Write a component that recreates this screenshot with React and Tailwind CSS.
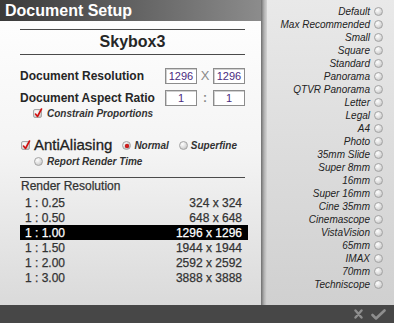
import React from 'react';

const presets = [
    'Default', 'Max Recommended', 'Small', 'Square', 'Standard', 'Panorama', 'QTVR Panorama',
    'Letter', 'Legal', 'A4', 'Photo', '35mm Slide', 'Super 8mm', '16mm', 'Super 16mm',
    'Cine 35mm', 'Cinemascope', 'VistaVision', '65mm', 'IMAX', '70mm', 'Techniscope',
];

const resolutions = [
    { ratio: '1 : 0.25', size: '324 x 324' },
    { ratio: '1 : 0.50', size: '648 x 648' },
    { ratio: '1 : 1.00', size: '1296 x 1296', active: true },
    { ratio: '1 : 1.50', size: '1944 x 1944' },
    { ratio: '1 : 2.00', size: '2592 x 2592' },
    { ratio: '1 : 3.00', size: '3888 x 3888' },
];

const Radio = ({ checked }) => (
    <span className="relative inline-block w-[9px] h-[9px] shrink-0 rounded-full border border-[#a4a4a4] bg-[radial-gradient(circle_at_35%_30%,#ffffff,#dcdcdc_55%,#b4b4b4)]">
        {checked && <span className="absolute left-[1.5px] top-[1.5px] w-[4px] h-[4px] rounded-full bg-[#d41c1c] shadow-[0_0_1px_#700]"></span>}
    </span>
);

const Check = () => (
    <span className="relative inline-block w-[9px] h-[9px] shrink-0 rounded-[2px] border border-[#a8a8a8] bg-[radial-gradient(circle_at_35%_30%,#ffffff,#d8d8d8_60%,#b8b8b8)]">
        <svg className="absolute -top-[2px] left-[0px]" width="9" height="10" viewBox="0 0 9 10">
            <path d="M1.5 6 L3.5 8.5 L7.5 1" fill="none" stroke="#d01010" strokeWidth="1.6" strokeLinecap="round" strokeLinejoin="round" />
        </svg>
    </span>
);

const Box = ({ value }) => (
    <div className="w-[32px] h-[16px] bg-white border border-[#8c8c8c] shadow-[inset_1px_1px_0_#d0d0d0] flex items-center justify-center text-[11px] text-[#4a2a80] leading-none">
        {value}
    </div>
);

export default function App() {
    return (
        <div className="w-[394px] h-[323px] flex flex-col overflow-hidden font-['Liberation_Sans',Arial,sans-serif] text-[#262626]">
            <div className="flex flex-1 min-h-0">
                {/* Left: document settings */}
                <div className="w-[261px] flex flex-col bg-gradient-to-b from-white via-[#f4f4f4] to-[#dadada]">
                    <div className="h-[21px] bg-gradient-to-r from-[#3a3a3a] to-[#8c8c8c] flex items-center pl-[5px]">
                        <span className="text-white font-bold text-[16px] leading-none">Document Setup</span>
                    </div>
                    <div className="pl-[20px] pr-[16px] flex flex-col flex-1">
                        <div className="mt-[8px] h-px bg-[#4a4a4a]"></div>
                        <div className="h-[24px] flex items-center justify-center font-bold text-[16px]">Skybox3</div>
                        <div className="h-px bg-[#4a4a4a]"></div>

                        <div className="mt-[13px] h-[16px] flex items-center">
                            <span className="w-[145px] font-bold text-[12px]">Document Resolution</span>
                            <Box value="1296" />
                            <span className="w-[16px] text-center text-[13px] text-[#8a8a8a]">X</span>
                            <Box value="1296" />
                        </div>
                        <div className="mt-[6px] h-[16px] flex items-center">
                            <span className="w-[145px] font-bold text-[12px]">Document Aspect Ratio</span>
                            <Box value="1" />
                            <span className="w-[16px] text-center text-[12px] text-[#8a8a8a] font-bold">:</span>
                            <Box value="1" />
                        </div>
                        <div className="mt-[1px] h-[12px] flex items-center pl-[13px] gap-[5px]">
                            <Check />
                            <span className="italic font-bold text-[10px] text-[#333]">Constrain Proportions</span>
                        </div>

                        <div className="mt-[17px] h-[18px] flex items-center pl-[1px]">
                            <Check />
                            <span className="ml-[4px] text-[15px] text-[#222] [-webkit-text-stroke:0.3px_#222]">AntiAliasing</span>
                            <span className="ml-[10px]"><Radio checked /></span>
                            <span className="ml-[3px] italic font-bold text-[10px] text-[#333]">Normal</span>
                            <span className="ml-[10px]"><Radio /></span>
                            <span className="ml-[3px] italic font-bold text-[10px] text-[#333]">Superfine</span>
                        </div>
                        <div className="mt-[1px] h-[12px] flex items-center pl-[14px] gap-[4px]">
                            <Radio />
                            <span className="italic font-bold text-[10px] text-[#333]">Report Render Time</span>
                        </div>

                        <div className="mt-[10px] h-px bg-[#4a4a4a]"></div>
                        <div className="mt-[1px] h-[14px] flex items-center pl-[1px] text-[12px] text-[#333] [-webkit-text-stroke:0.25px_#333]">Render Resolution</div>
                        <div className="mt-[2px] w-[228px] flex flex-col text-[12px]">
                            {resolutions.map((r) => (
                                <div key={r.ratio} className={`h-[15px] flex items-center justify-between pl-[5px] pr-[6px] ${r.active ? 'bg-black text-white [-webkit-text-stroke:0.25px_#fff]' : 'text-[#333] [-webkit-text-stroke:0.25px_#333]'}`}>
                                    <span>{r.ratio}</span>
                                    <span>{r.size}</span>
                                </div>
                            ))}
                        </div>
                    </div>
                </div>

                {/* Divider */}
                <div className="w-[6px] bg-gradient-to-r from-[#6e6e6e] via-[#b0b0b0] to-[#d4d4d4]"></div>

                {/* Right: presets */}
                <div className="flex-1 bg-gradient-to-b from-[#e9e9e9] to-[#d0d0d0] pt-[5px] pr-[11px] flex flex-col">
                    {presets.map((p) => (
                        <div key={p} className="h-[13px] flex items-center justify-end gap-[4px]">
                            <span className="italic text-[10px] text-[#222]">{p}</span>
                            <Radio />
                        </div>
                    ))}
                </div>
            </div>

            {/* Bottom bar */}
            <div className="h-[18px] bg-[#474747] flex items-center justify-end gap-[8px] pr-[8px]">
                <svg width="9" height="10" viewBox="0 0 9 10">
                    <path d="M1.5 1.5 L7.5 8.5 M7.5 1.5 L1.5 8.5" stroke="#8e8e8e" strokeWidth="2.4" strokeLinecap="round" />
                </svg>
                <svg width="15" height="11" viewBox="0 0 15 11">
                    <path d="M1.5 6 L5 9.5 L13.5 1.5" fill="none" stroke="#8e8e8e" strokeWidth="2.6" strokeLinecap="round" strokeLinejoin="round" />
                </svg>
            </div>
        </div>
    );
}
